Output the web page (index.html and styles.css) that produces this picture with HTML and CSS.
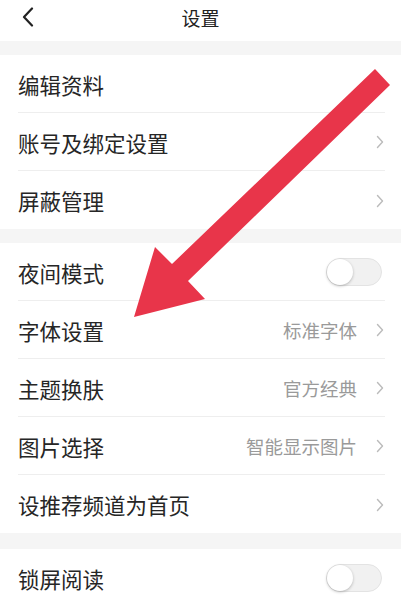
FILE: index.html
```html
<!DOCTYPE html>
<html lang="zh-CN">
<head>
<meta charset="utf-8">
<title>设置</title>
<link rel="stylesheet" href="styles.css">
</head>
<body>
<div class="page">
  <header class="topbar">
    <svg class="back" width="12" height="20" viewBox="0 0 12 20"><path d="M10 1.5 L2 10 L10 18.5" fill="none" stroke="#222" stroke-width="2.2" stroke-linecap="round" stroke-linejoin="round"/></svg>
    <h1 class="title">设置</h1>
  </header>
  <div class="band"></div>
  <section class="group">
    <div class="row"><span class="label">编辑资料</span></div>
    <div class="row"><span class="label">账号及绑定设置</span><svg class="chev" width="8" height="14" viewBox="0 0 8 14"><path d="M1.5 1.5 L6.5 7 L1.5 12.5" fill="none" stroke="#bbb" stroke-width="1.4" stroke-linecap="round" stroke-linejoin="round"/></svg></div>
    <div class="row"><span class="label">屏蔽管理</span><svg class="chev" width="8" height="14" viewBox="0 0 8 14"><path d="M1.5 1.5 L6.5 7 L1.5 12.5" fill="none" stroke="#bbb" stroke-width="1.4" stroke-linecap="round" stroke-linejoin="round"/></svg></div>
  </section>
  <div class="band"></div>
  <section class="group">
    <div class="row"><span class="label">夜间模式</span><span class="toggle"></span></div>
    <div class="row"><span class="label">字体设置</span><span class="value">标准字体</span><svg class="chev" width="8" height="14" viewBox="0 0 8 14"><path d="M1.5 1.5 L6.5 7 L1.5 12.5" fill="none" stroke="#bbb" stroke-width="1.4" stroke-linecap="round" stroke-linejoin="round"/></svg></div>
    <div class="row"><span class="label">主题换肤</span><span class="value">官方经典</span><svg class="chev" width="8" height="14" viewBox="0 0 8 14"><path d="M1.5 1.5 L6.5 7 L1.5 12.5" fill="none" stroke="#bbb" stroke-width="1.4" stroke-linecap="round" stroke-linejoin="round"/></svg></div>
    <div class="row"><span class="label">图片选择</span><span class="value">智能显示图片</span><svg class="chev" width="8" height="14" viewBox="0 0 8 14"><path d="M1.5 1.5 L6.5 7 L1.5 12.5" fill="none" stroke="#bbb" stroke-width="1.4" stroke-linecap="round" stroke-linejoin="round"/></svg></div>
    <div class="row"><span class="label">设推荐频道为首页</span><svg class="chev" width="8" height="14" viewBox="0 0 8 14"><path d="M1.5 1.5 L6.5 7 L1.5 12.5" fill="none" stroke="#bbb" stroke-width="1.4" stroke-linecap="round" stroke-linejoin="round"/></svg></div>
  </section>
  <div class="band band-tall"></div>
  <section class="group">
    <div class="row"><span class="label">锁屏阅读</span><span class="toggle"></span></div>
  </section>
  <svg class="arrow" width="401" height="610" viewBox="0 0 401 610"><polygon points="375,69 390,85 188,281 205,299 134,317 155,247 172,264" fill="#e8354a"/></svg>
</div>
</body>
</html>
```

FILE: styles.css
```css
* { box-sizing: border-box; }
html, body { margin: 0; padding: 0; background: #fff; }
body {
  font-family: "Noto Sans CJK SC", "Noto Sans", sans-serif;
  color: #222;
  height: 610px;
  overflow: hidden;
}
.page {
  position: relative;
  width: 401px;
}
.topbar {
  height: 41px;
  display: flex;
  align-items: center;
  justify-content: center;
  position: relative;
}
.back {
  position: absolute;
  left: 22px;
  top: 7px;
}
.title {
  margin: -7px 0 0;
  font-size: 19px;
  font-weight: 400;
  line-height: 1;
  color: #222;
}
.band {
  height: 14px;
  background: #f5f5f5;
}
.band-tall { height: 16px; }
.group {
  padding-left: 18px;
}
.row {
  height: 58px;
  display: flex;
  align-items: center;
  padding-right: 18px;
  border-bottom: 1px solid #eeeeee;
}
.row:last-child { border-bottom: none; }
.row:not(:last-child) { margin-right: 16px; padding-right: 2px; }
.label {
  font-size: 21.5px;
  line-height: 1;
  flex: 1;
  margin-top: 2px;
  color: #262626;
}
.value {
  font-size: 18.5px;
  color: #9a9a9a;
  line-height: 1;
  margin-right: 19px;
  margin-top: 1px;
}
.chev {
  display: block;
  margin-right: -1px;
  margin-top: 1px;
}
.toggle {
  position: relative;
  width: 56px;
  height: 28px;
  border-radius: 14px;
  background: #f1f1f1;
  border: 1px solid #e3e3e3;
  margin-right: 1px;
}
.toggle::before {
  content: "";
  position: absolute;
  left: 0;
  top: 0;
  width: 26px;
  height: 26px;
  border-radius: 50%;
  background: #fff;
  box-shadow: 0 1px 3px rgba(0,0,0,0.25);
}
.arrow {
  position: absolute;
  left: 0;
  top: 0;
  pointer-events: none;
}
```
